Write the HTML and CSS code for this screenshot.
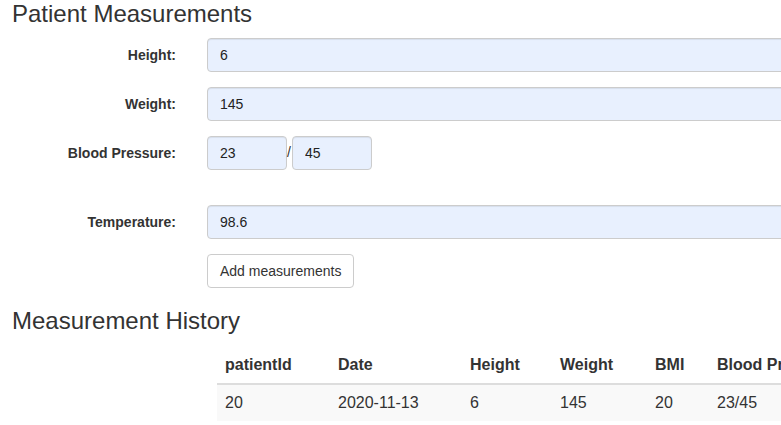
FILE: index.html
```html
<!DOCTYPE html>
<html>
<head>
<meta charset="utf-8">
<title>Patient Measurements</title>
<link rel="stylesheet" href="styles.css">
</head>
<body>
<div class="page">
  <h3 class="title">Patient Measurements</h3>
  <form class="form">
    <div class="form-row">
      <label class="form-label">Height:</label>
      <input class="field field-wide" type="text" value="6">
    </div>
    <div class="form-row">
      <label class="form-label">Weight:</label>
      <input class="field field-wide" type="text" value="145">
    </div>
    <div class="form-row form-row-bp">
      <label class="form-label">Blood Pressure:</label>
      <div class="bp">
        <input class="field field-small" type="text" value="23">
        <span class="slash">/</span>
        <input class="field field-small" type="text" value="45">
      </div>
    </div>
    <div class="form-row">
      <label class="form-label">Temperature:</label>
      <input class="field field-wide" type="text" value="98.6">
    </div>
    <div class="form-row">
      <span class="form-label"></span>
      <button class="btn" type="button">Add measurements</button>
    </div>
  </form>
  <h3 class="title title-history">Measurement History</h3>
  <div class="table-wrap">
    <table class="history">
      <thead>
        <tr>
          <th>patientId</th>
          <th>Date</th>
          <th>Height</th>
          <th>Weight</th>
          <th>BMI</th>
          <th>Blood Pressure</th>
          <th>Temperature</th>
        </tr>
      </thead>
      <tbody>
        <tr>
          <td>20</td>
          <td>2020-11-13</td>
          <td>6</td>
          <td>145</td>
          <td>20</td>
          <td>23/45</td>
          <td>98.6</td>
        </tr>
      </tbody>
    </table>
  </div>
</div>
</body>
</html>
```
FILE: styles.css
```css
html, body {
  margin: 0;
  padding: 0;
  overflow: hidden;
  background: #fff;
}
body {
  font-family: "Liberation Sans", Arial, Helvetica, sans-serif;
  font-size: 14px;
  line-height: 20px;
  color: #333;
}
.page {
  padding-left: 12px;
  width: 1100px;
}
.title {
  font-size: 24px;
  font-weight: 500;
  line-height: 26px;
  margin: 1px 0 11px;
  color: #333;
}
.form {
  margin: 0;
}
.form-row {
  display: flex;
  align-items: flex-start;
  margin-bottom: 15px;
}
.form-row-bp {
  margin-bottom: 35px;
}
.form-label {
  width: 164px;
  padding-right: 31px;
  text-align: right;
  font-weight: bold;
  line-height: 34px;
  flex: none;
}
.field {
  height: 34px;
  box-sizing: border-box;
  padding: 6px 12px;
  font-family: inherit;
  font-size: 14px;
  line-height: 20px;
  color: #222;
  background: #e8f0fe;
  border: 1px solid #ccc;
  border-radius: 4px;
  box-shadow: inset 0 1px 1px rgba(0,0,0,0.075);
  margin: 0;
  outline: none;
}
.field-wide {
  width: 700px;
}
.bp {
  display: flex;
  align-items: flex-start;
}
.field-small {
  width: 80px;
}
.slash {
  width: 5px;
  margin-top: 6px;
  line-height: 20px;
  color: #333;
}
.btn {
  height: 34px;
  box-sizing: border-box;
  padding: 6px 12px;
  font-family: inherit;
  font-size: 14px;
  line-height: 20px;
  color: #333;
  background: #fff;
  border: 1px solid #ccc;
  border-radius: 4px;
  margin: 0;
}
.title-history {
  margin-top: 20px;
  margin-bottom: 13px;
}
.table-wrap {
  padding-left: 205px;
}
.history {
  border-collapse: collapse;
  border-spacing: 0;
  font-size: 16px;
}
.history th,
.history td {
  padding: 8px;
  text-align: left;
  white-space: nowrap;
  line-height: 20px;
}
.history th {
  font-weight: bold;
  border-bottom: 2px solid #ddd;
}
.history tbody tr {
  background: #f9f9f9;
}
.history th:nth-child(1) { width: 97px; }
.history th:nth-child(2) { width: 116px; }
.history th:nth-child(3) { width: 74px; }
.history th:nth-child(4) { width: 79px; }
.history th:nth-child(5) { width: 46px; }
.history th:nth-child(6) { width: 120px; }
.history th:nth-child(7) { width: 110px; }
```
